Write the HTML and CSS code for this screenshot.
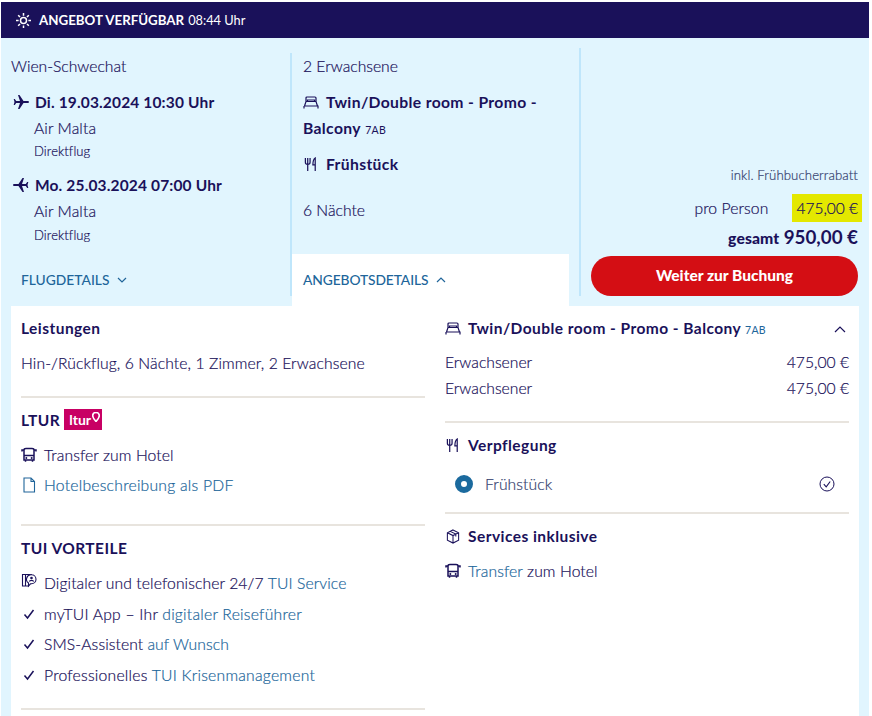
FILE: index.html
```html
<!DOCTYPE html>
<html lang="de">
<head>
<meta charset="utf-8">
<title>Angebot</title>
<link rel="stylesheet" href="styles.css">
</head>
<body>
<svg width="0" height="0" class="defs">
  <symbol id="bed" viewBox="0 0 16 14"><path d="M3 6V2.500C3 1.900 3.400 1.500 4 1.500h8c.6 0 1 .4 1 1V6M1.500 10.500 3 6h10l1.500 4.500M1 10.500h14v2.500M1 13v-2.500M4.500 6V4.500h7V6" fill="none" stroke="currentColor" stroke-width="1.200"/></symbol>
  <symbol id="fork" viewBox="0 0 14 16"><path d="M1 1v4.500C1 7 2 7.800 3.500 7.800S6 7 6 5.500V1M3.500 1v14M11.500 15V1C9.800 2 9 4.500 9 8.500h2.500" fill="none" stroke="currentColor" stroke-width="1.300"/></symbol>
  <symbol id="bus" viewBox="0 0 16 16"><path d="M3 13V3c0-1 .8-1.500 2-1.500h6c1.200 0 2 .5 2 1.500v10zM3 8.500h10M1 4.500V3h2M15 4.500V3h-2M4.500 13v1.800M11.500 13v1.800" fill="none" stroke="currentColor" stroke-width="1.500"/><circle cx="5.300" cy="11" r="1" fill="currentColor"/><circle cx="10.700" cy="11" r="1" fill="currentColor"/></symbol>
  <symbol id="check" viewBox="0 0 12 12"><path d="M1.500 6.500 4.500 10 10.500 2" fill="none" stroke="currentColor" stroke-width="1.500"/></symbol>
</svg>
<main class="page">
  <header class="status">
    <svg class="sun" viewBox="0 0 16 16"><circle cx="8" cy="8" r="3.200" fill="none" stroke="currentColor" stroke-width="1.600"/><path d="M8 0v2.800M8 13.200V16M0 8h2.800M13.200 8H16M2.300 2.300l2 2M11.700 11.700l2 2M2.300 13.700l2-2M11.700 4.300l2-2" stroke="currentColor" stroke-width="1.600"/></svg>
    <strong>ANGEBOT VERFÜGBAR</strong> <span class="time">08:44 Uhr</span>
  </header>
  <section class="summary">
    <div class="col flights">
      <p class="plain first">Wien-Schwechat</p>
      <div class="leg">
        <svg class="ic plane" viewBox="0 0 16 16"><path d="M16 8c0-.7-.7-1-1.500-1H10.500L6.500 1H5l2 6H3.200L1.800 5H.700l.8 3-.8 3h1.100l1.400-2H7l-2 6h1.500l4-6h4c.8 0 1.500-.3 1.500-1z" fill="currentColor"/></svg>
        <b>Di. 19.03.2024 10:30 Uhr</b>
      </div>
      <p class="indent air">Air Malta</p>
      <p class="indent small">Direktflug</p>
      <div class="leg second">
        <svg class="ic plane" viewBox="0 0 16 16"><path d="M0 8c0-.7.700-1 1.500-1H5.500l4-6H11L9 7h3.800l1.400-2h1.100l-.8 3 .8 3h-1.100l-1.400-2H9l2 6H9.500l-4-6h-4C.7 9 0 8.700 0 8z" fill="currentColor"/></svg>
        <b>Mo. 25.03.2024 07:00 Uhr</b>
      </div>
      <p class="indent air">Air Malta</p>
      <p class="indent small last">Direktflug</p>
      <a class="toggle flight-toggle">FLUGDETAILS <svg class="chev" viewBox="0 0 10 6"><path d="M1 1l4 4 4-4" fill="none" stroke="currentColor" stroke-width="1.200"/></svg></a>
    </div>
    <div class="col offer">
      <p class="plain first">2 Erwachsene</p>
      <p class="room"><svg class="ic bed"><use href="#bed"/></svg><b>Twin/Double room - Promo -</b><br><b>Balcony</b> <span class="code">7AB</span></p>
      <p class="meal"><svg class="ic fork"><use href="#fork"/></svg><b>Frühstück</b></p>
      <p class="plain nights">6 Nächte</p>
      <div class="tab"><a class="toggle">ANGEBOTSDETAILS <svg class="chev" viewBox="0 0 10 6"><path d="M1 5l4-4 4 4" fill="none" stroke="currentColor" stroke-width="1.200"/></svg></a></div>
    </div>
    <div class="col price">
      <p class="discount">inkl. Frühbucherrabatt</p>
      <div class="per"><span>pro Person</span><span class="mark">475,00 €</span></div>
      <p class="total"><b>gesamt</b> <span>950,00 €</span></p>
      <button class="cta" type="button">Weiter zur Buchung</button>
    </div>
  </section>
  <section class="details">
    <div class="left">
      <h3>Leistungen</h3>
      <p class="line lead">Hin-/Rückflug, 6 Nächte, 1 Zimmer, 2 Erwachsene</p>
      <hr>
      <h3 class="ltur">LTUR <span class="badge">ltur<svg viewBox="0 0 8 10"><path d="M4 .5C2 .5.700 2 .700 3.700.7 6 4 9.500 4 9.500S7.300 6 7.300 3.700C7.300 2 6 .5 4 .5z" fill="none" stroke="#fff" stroke-width="1.600"/></svg></span></h3>
      <p class="line item t1"><svg class="ic li"><use href="#bus"/></svg>Transfer zum Hotel</p>
      <p class="line item link t2 wide"><svg class="ic li" viewBox="0 0 14 16"><path d="M2 1h7l3.500 3.500V15H2zM9 1v3.500h3.500" fill="none" stroke="currentColor" stroke-width="1.100"/></svg>Hotelbeschreibung als PDF</p>
      <hr class="r2">
      <h3>TUI VORTEILE</h3>
      <p class="line item t1"><svg class="ic li svc-ic" viewBox="0 0 16 16"><path d="M8 13H1.500V1.500h9v1.500M4.500 13V1.500" fill="none" stroke="currentColor" stroke-width="1.100"/><path d="M10.500 1.800a4.500 4.500 0 0 1 0 9H9.500L7.500 13v-3a4.500 4.500 0 0 1 3-8.200z" fill="#fff" stroke="currentColor" stroke-width="1.100"/><circle cx="10.500" cy="5" r="1.300" fill="currentColor"/><path d="M8.300 8.500c.5-1.500 3.900-1.500 4.400 0" fill="none" stroke="currentColor" stroke-width="1.100"/></svg>Digitaler und telefonischer 24/7 <a>TUI Service</a></p>
      <p class="line item t3 wide"><svg class="ic li tick"><use href="#check"/></svg>myTUI App – Ihr <a>digitaler Reiseführer</a></p>
      <p class="line item t3"><svg class="ic li tick"><use href="#check"/></svg>SMS-Assistent <a>auf Wunsch</a></p>
      <p class="line item t3 wide"><svg class="ic li tick"><use href="#check"/></svg>Professionelles <a>TUI Krisenmanagement</a></p>
      <hr class="r3">
    </div>
    <div class="right">
      <div class="rhead"><h3><svg class="ic li"><use href="#bed"/></svg>Twin/Double room - Promo - Balcony <span class="code blue">7AB</span></h3><svg class="chev up" viewBox="0 0 12 7"><path d="M1 6l5-5 5 5" fill="none" stroke="currentColor" stroke-width="1.200"/></svg></div>
      <div class="row r-a"><span>Erwachsener</span><span>475,00 €</span></div>
      <div class="row"><span>Erwachsener</span><span>475,00 €</span></div>
      <hr class="h1">
      <h3><svg class="ic li"><use href="#fork"/></svg>Verpflegung</h3>
      <div class="board"><span class="radio"></span><span class="bname">Frühstück</span><svg class="ok" viewBox="0 0 16 16"><circle cx="8" cy="8" r="7" fill="none" stroke="currentColor"/><path d="M4.800 8.200 7.200 10.800 11.200 5.500" fill="none" stroke="currentColor" stroke-width="1.100"/></svg></div>
      <hr class="h2">
      <h3><svg class="ic li" viewBox="0 0 16 16"><path d="M8 1 14 4v8l-6 3-6-3V4zM2 4l6 3 6-3M8 7v8M5 2.500l6 3v2.500" fill="none" stroke="currentColor" stroke-width="1.100"/></svg>Services inklusive</h3>
      <p class="line item svc"><svg class="ic li"><use href="#bus"/></svg><a>Transfer</a> zum Hotel</p>
    </div>
  </section>
</main>
</body>
</html>
```
FILE: styles.css
```css
* { box-sizing: border-box; }
html, body { margin: 0; padding: 0; background: #fff; height: 716px; overflow: hidden; }
body { font-family: Lato, "Open Sans", sans-serif; font-size: 15.7px; font-weight: 300; letter-spacing: .1px; color: #1a115a; -webkit-text-stroke: .2px currentColor; }
b, strong, h3, .cta, .toggle, .badge { font-weight: 700; -webkit-text-stroke: 0; }
p, h3 { margin: 0; }
.defs { position: absolute; }
.page { margin: 2px 0 0 1px; width: 868px; background: #e1f5fe; height: 714px; overflow: hidden; }
.status { height: 36px; background: #1a115a; color: #fff; display: flex; align-items: center; padding-left: 15px; font-size: 13.3px; gap: 4px; letter-spacing: 0; }
.time { font-size: 12.8px; font-weight: 400; -webkit-text-stroke: 0; }
.sun { width: 15px; height: 15px; margin-right: 4px; }
.summary { display: flex; height: 268px; }
.col { position: relative; }
.flights { width: 292px; padding: 18px 0 0 10px; }
.flights::after, .offer::after { content: ""; position: absolute; right: 0; bottom: 10px; width: 2px; background: #bfe6fb; }
.flights::after { top: 15px; }
.offer { width: 290px; padding: 18px 0 0 11px; display: flex; flex-direction: column; }
.offer::after { top: 10px; }
.price { flex: 1; padding: 128px 11px 0 10px; display: flex; flex-direction: column; align-items: flex-end; }
.plain { line-height: 20px; letter-spacing: 0; }
.leg { display: flex; align-items: center; line-height: 20px; margin-top: 16px; }
.leg b { font-size: 15.5px; letter-spacing: .15px; }
.leg.second { margin-top: 15px; }
.ic { flex: none; }
.plane { width: 16px; height: 16px; margin: 0 6px 0 2px; }
.indent { margin-left: 23px; }
.air { line-height: 20px; margin-top: 6px; }
.small { font-size: 13px; line-height: 18px; margin-top: 4px; }
.small.last { margin-top: 5px; }
.toggle { color: #20659a; font-size: 13.8px; font-weight: 500; white-space: nowrap; letter-spacing: 0; }
.chev { width: 10px; height: 6px; margin-left: 4px; vertical-align: 2px; }
.flight-toggle { position: absolute; left: 20px; top: 232px; line-height: 20px; }
.bed, .fork { width: 16px; height: 15px; margin-right: 7px; vertical-align: -2px; }
.room { margin-top: 13px; line-height: 26px; width: 260px; }
.room b, .meal b { letter-spacing: .35px; }
.code { font-size: 10.500px; letter-spacing: .3px; -webkit-text-stroke: 0; font-weight: 400; }
.blue { color: #20659a; }
.meal { margin-top: 11px; line-height: 20px; }
.nights { margin-top: 26px; }
.tab { margin: auto 0 0 -11px; width: 277px; height: 52px; background: #fff; padding: 15px 0 0 11px; line-height: 20px; }
.tab .toggle { letter-spacing: -.1px; }
.discount { font-size: 13.2px; line-height: 18px; color: #33406e; }
.per { display: flex; align-items: center; margin-top: 10px; line-height: 28px; }
.mark { background: #e4e800; padding: 0 4px; margin-left: 24px; margin-right: -4px; font-size: 15.5px; letter-spacing: 0; }
.total { margin-top: 3px; line-height: 24px; }
.total b { font-weight: 900; font-size: 15.7px; }
.total span { font-size: 18.8px; font-weight: 700; letter-spacing: 0; -webkit-text-stroke: 0; }
.cta { margin-top: 6px; width: 267px; height: 40px; border: 0; border-radius: 20px; background: #d40e14; color: #fff; font: 900 15.5px Lato, sans-serif; padding: 0 0 2px; }
.details { margin: 0 10px; background: #fff; display: flex; padding: 0 10px; height: 410px; }
.left { width: 404px; margin-right: 20px; padding-top: 12px; }
.right { width: 404px; padding-top: 12px; }
h3 { font-size: 15.5px; line-height: 20px; letter-spacing: .45px; white-space: nowrap; }
h3 .ic { margin-right: 7px; vertical-align: -2px; width: 16px; height: 15px; }
hr { border: 0; height: 2px; background: #e8e4de; margin: 0; }
.line { line-height: 20px; white-space: nowrap; }
.wide { letter-spacing: .24px; }
.lead { margin-top: 15px; }
.left hr { margin-top: 23px; margin-bottom: 11px; }
.left hr.r2 { margin-top: 29px; margin-bottom: 12px; }
.left hr.r3 { margin-top: 23.500px; }
.ltur { display: flex; align-items: center; gap: 4px; }
.badge { display: inline-flex; align-items: center; background: #c80064; color: #fff; height: 21px; width: 38px; padding-left: 5px; font-size: 14px; letter-spacing: 0; }
.badge svg { width: 8px; height: 10px; margin: -5px 0 0 1px; }
.item { display: flex; align-items: center; }
.item a, .link { color: #20659a; }
.item a { margin-left: .26em; }
.li { width: 16px; height: 16px; margin-right: 7px; }
.svc-ic { margin-top: -4px; }
.tick { width: 12px; height: 12px; margin: 0 9px 0 2px; }
.t1 { margin-top: 15px; }
.t2 { margin-top: 10px; }
.t3 { margin-top: 10.500px; }
.rhead { display: flex; justify-content: space-between; align-items: center; }
.up { width: 12px; height: 7px; margin-right: 3px; }
.row { display: flex; justify-content: space-between; line-height: 20px; margin-top: 6px; letter-spacing: 0; }
.r-a { margin-top: 12px; }
.h1 { margin-top: 23px; margin-bottom: 12px; }
.board { display: flex; align-items: center; margin-top: 19px; padding-left: 10px; height: 20px; color: #33406e; }
.radio { width: 18px; height: 18px; border-radius: 50%; border: 6px solid #1b6a9e; background: #fff; margin-right: 12px; }
.ok { width: 16px; height: 16px; margin-left: auto; margin-right: 14px; color: #1a115a; }
.h2 { margin-top: 18px; margin-bottom: 12px; }
.svc { margin-top: 15px; }
.svc a { margin-left: 0; margin-right: .26em; }
```
